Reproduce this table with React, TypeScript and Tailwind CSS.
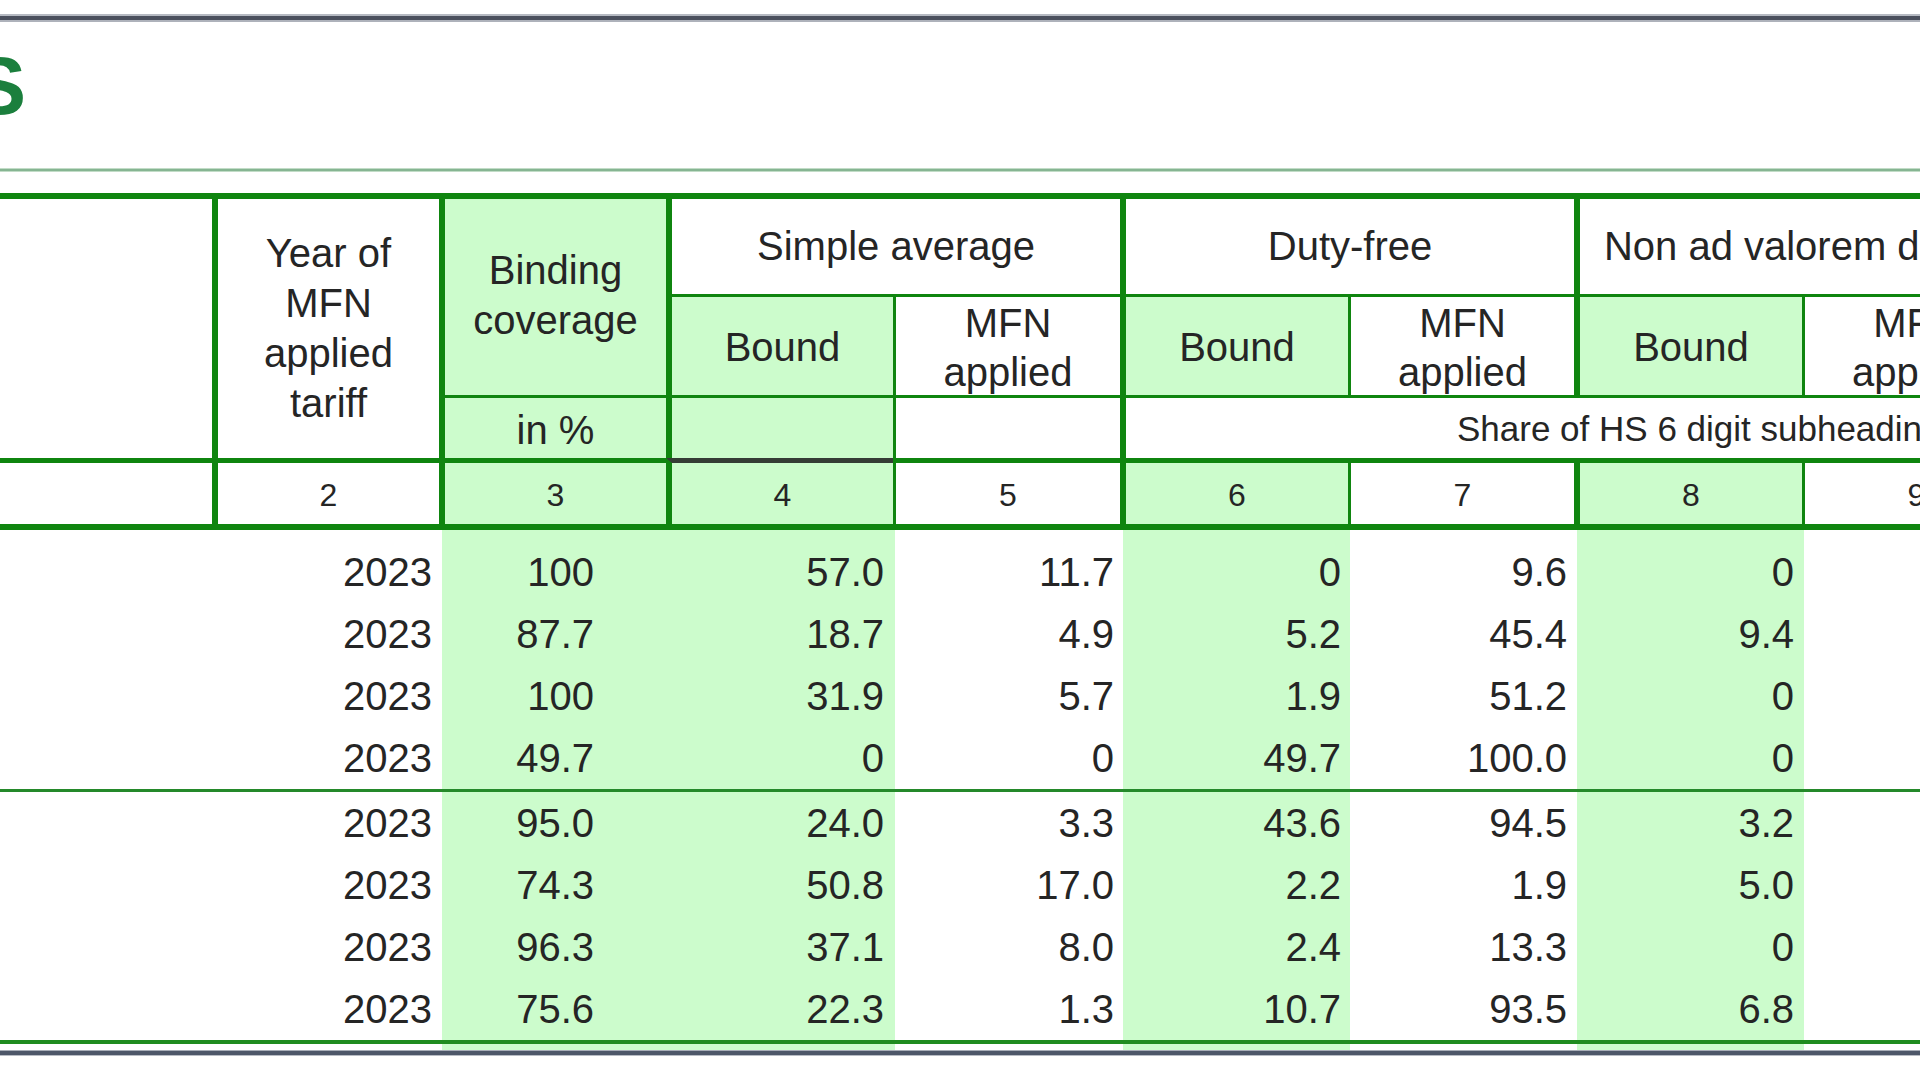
import React from "react";

const HEAD_COLS =
  "grid grid-cols-[212px_227px_227px_227px_227px_228px_226px_228px_226px_227px] grid-rows-[95px_101px_63px_66px]";
const DATA_COLS =
  "grid grid-cols-[215px_227px_227px_226px_228px_227px_227px_227px_227px]";

const cell = "flex items-center justify-center text-center border-[#0f850f]";
const fill = "bg-[#ccfccc]";

function Header() {
  return (
    <div className="w-[2255px] border-t-[6px] border-b-[6px] border-[#0f850f] text-[40px] text-[#252525]">
      <div className={HEAD_COLS}>
        {/* Row 1 */}
        <div className={`${cell} col-start-1 row-start-1 row-span-3`} />
        <div className={`${cell} col-start-2 row-start-1 row-span-3 border-l-[6px] leading-[50px] pb-[2px]`}>
          <span>
            Year of
            <br />
            MFN
            <br />
            applied
            <br />
            tariff
          </span>
        </div>
        <div className={`${cell} ${fill} col-start-3 row-start-1 row-span-2 border-l-[6px] leading-[50px] pb-[4px]`}>
          <span>
            Binding
            <br />
            coverage
          </span>
        </div>
        <div className={`${cell} col-start-4 col-span-2 row-start-1 border-l-[6px] leading-[48px] whitespace-nowrap pb-[2px]`}>
          Simple average
        </div>
        <div className={`${cell} col-start-6 col-span-2 row-start-1 border-l-[6px] leading-[48px] whitespace-nowrap pb-[2px]`}>
          Duty-free
        </div>
        <div className={`${cell} col-start-8 col-span-2 row-start-1 border-l-[6px] leading-[48px] whitespace-nowrap pb-[2px]`}>
          Non ad valorem duties
        </div>
        <div className={`${cell} col-start-10 row-start-1 row-span-2 border-l-[6px]`} />

        {/* Row 2 */}
        <div className={`${cell} ${fill} col-start-4 row-start-2 border-l-[6px] border-t-[3px] leading-[48px] pt-[2px]`}>Bound</div>
        <div className={`${cell} col-start-5 row-start-2 border-l-[3px] border-t-[3px] leading-[49px] pt-[4px]`}>
          <span>
            MFN
            <br />
            applied
          </span>
        </div>
        <div className={`${cell} ${fill} col-start-6 row-start-2 border-l-[6px] border-t-[3px] leading-[48px] pt-[2px]`}>Bound</div>
        <div className={`${cell} col-start-7 row-start-2 border-l-[3px] border-t-[3px] leading-[49px] pt-[4px]`}>
          <span>
            MFN
            <br />
            applied
          </span>
        </div>
        <div className={`${cell} ${fill} col-start-8 row-start-2 border-l-[6px] border-t-[3px] leading-[48px] pt-[2px]`}>Bound</div>
        <div className={`${cell} col-start-9 row-start-2 border-l-[3px] border-t-[3px] leading-[49px] pt-[4px]`}>
          <span>
            MFN
            <br />
            applied
          </span>
        </div>

        {/* Row 3 */}
        <div className={`${cell} ${fill} col-start-3 row-start-3 border-l-[6px] border-t-[3px] leading-[48px] pt-[4px]`}>in %</div>
        <div className={`${cell} ${fill} col-start-4 row-start-3 border-l-[6px] border-t-[3px]`} />
        <div className={`${cell} col-start-5 row-start-3 border-l-[3px] border-t-[3px]`} />
        <div
          className={`${cell} col-start-6 col-span-5 row-start-3 border-l-[6px] border-t-[3px] !justify-start pl-[331px] text-[35px] leading-[40px] whitespace-nowrap pt-[1px]`}
        >
          Share of HS 6 digit subheadings in %
        </div>

        {/* Row 4 */}
        <div className={`${cell} col-start-1 row-start-4 border-t-[5px]`} />
        <div className={`${cell} col-start-2 row-start-4 border-t-[5px] border-l-[6px] text-[32px] leading-none pt-[3px]`}>2</div>
        <div className={`${cell} ${fill} col-start-3 row-start-4 border-t-[5px] border-l-[6px] text-[32px] leading-none pt-[3px]`}>3</div>
        <div
          className={`${cell} ${fill} col-start-4 row-start-4 border-t-[5px] border-l-[6px] border-t-[#353c35] text-[32px] leading-none pt-[3px]`}
        >
          4
        </div>
        <div className={`${cell} col-start-5 row-start-4 border-t-[5px] border-l-[3px] text-[32px] leading-none pt-[3px]`}>5</div>
        <div className={`${cell} ${fill} col-start-6 row-start-4 border-t-[5px] border-l-[6px] text-[32px] leading-none pt-[3px]`}>6</div>
        <div className={`${cell} col-start-7 row-start-4 border-t-[5px] border-l-[3px] text-[32px] leading-none pt-[3px]`}>7</div>
        <div className={`${cell} ${fill} col-start-8 row-start-4 border-t-[5px] border-l-[6px] text-[32px] leading-none pt-[3px]`}>8</div>
        <div className={`${cell} col-start-9 row-start-4 border-t-[5px] border-l-[3px] text-[32px] leading-none pt-[3px]`}>9</div>
        <div className={`${cell} col-start-10 row-start-4 border-t-[5px] border-l-[6px]`} />
      </div>
    </div>
  );
}

const PADS = ["pr-0", "pr-[10px]", "pr-[75px]", "pr-[11px]", "pr-[9px]", "pr-[9px]", "pr-[10px]", "pr-[10px]", "pr-[10px]"];
const TINT = [false, false, true, true, false, true, false, true, false];

function DataRow({ values, h }: { values: string[]; h: string }) {
  const cells = ["", ...values, ""];
  return (
    <div className={`${DATA_COLS} ${h}`}>
      {cells.map((v, i) => (
        <div
          key={i}
          className={`flex items-center justify-end text-[40px] leading-none ${PADS[i]} ${TINT[i] ? fill : "bg-white"}`}
        >
          {v}
        </div>
      ))}
    </div>
  );
}

function Spacer({ h }: { h: string }) {
  return (
    <div className={`${DATA_COLS} ${h}`}>
      {TINT.map((t, i) => (
        <div key={i} className={t ? fill : "bg-white"} />
      ))}
    </div>
  );
}

const group1 = [
  ["2023", "100", "57.0", "11.7", "0", "9.6", "0"],
  ["2023", "87.7", "18.7", "4.9", "5.2", "45.4", "9.4"],
  ["2023", "100", "31.9", "5.7", "1.9", "51.2", "0"],
  ["2023", "49.7", "0", "0", "49.7", "100.0", "0"],
];
const group2 = [
  ["2023", "95.0", "24.0", "3.3", "43.6", "94.5", "3.2"],
  ["2023", "74.3", "50.8", "17.0", "2.2", "1.9", "5.0"],
  ["2023", "96.3", "37.1", "8.0", "2.4", "13.3", "0"],
  ["2023", "75.6", "22.3", "1.3", "10.7", "93.5", "6.8"],
];

function Data() {
  return (
    <div className="w-[2031px] text-[#252525]">
      <Spacer h="h-[11px]" />
      {group1.map((r, i) => (
        <DataRow key={i} values={r} h="h-[62px]" />
      ))}
      <div className="h-[3px] bg-[#24892a]" />
      {group2.map((r, i) => (
        <DataRow key={i} values={r} h="h-[62px]" />
      ))}
      <div className="h-[4px] bg-[#1f8c1f]" />
      <Spacer h="h-[6px]" />
      <div className="h-[1px] bg-[#a9aeb8]" />
      <div className="h-[4px] bg-[#4e5769]" />
      <div className="h-[1px] bg-[#b8bcc4]" />
    </div>
  );
}

export default function App() {
  return (
    <div className="w-[1920px] h-[1080px] overflow-hidden bg-white font-['Liberation_Sans',Arial,sans-serif]">
      <div className="h-[14px]" />
      <div className="h-[2px] bg-[#b6bac2]" />
      <div className="h-[4px] bg-[#4b505d]" />
      <div className="h-[2px] bg-[#aeb2bb]" />
      <div className="h-[146px] pt-[24px]">
        <div className="ml-[-28px] text-[81px] leading-[81px] font-bold text-[#1b7f3d]">S</div>
      </div>
      <div className="h-[1px] bg-[#c2dcc7]" />
      <div className="h-[2px] bg-[#86b592]" />
      <div className="h-[1px] bg-[#c2dcc7]" />
      <div className="h-[21px]" />
      <Header />
      <Data />
    </div>
  );
}
